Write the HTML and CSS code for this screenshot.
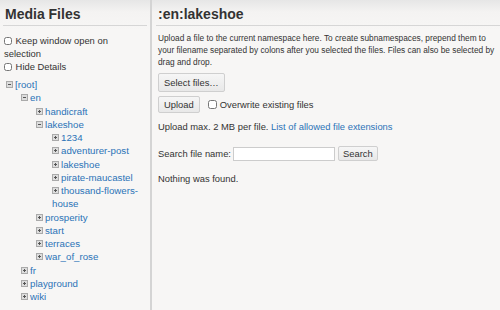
FILE: index.html
```html
<!DOCTYPE html>
<html>
<head>
<meta charset="utf-8">
<link rel="stylesheet" href="styles.css">
</head>
<body>
<div class="page">
  <aside class="side">
    <h1 class="title">Media Files</h1>
    <div class="opts">
      <label class="opt"><input type="checkbox" class="cb"> Keep window open on selection</label>
      <label class="opt"><input type="checkbox" class="cb"> Hide Details</label>
    </div>
    <ul class="tree">
      <li><span class="ic minus"></span><a>[root]</a>
        <ul>
          <li><span class="ic minus"></span><a>en</a>
            <ul>
              <li><span class="ic plus"></span><a>handicraft</a></li>
              <li><span class="ic minus"></span><a>lakeshoe</a>
                <ul>
                  <li><span class="ic plus"></span><a>1234</a></li>
                  <li><span class="ic plus"></span><a>adventurer-post</a></li>
                  <li><span class="ic plus"></span><a>lakeshoe</a></li>
                  <li><span class="ic plus"></span><a>pirate-maucastel</a></li>
                  <li><span class="ic plus"></span><a>thousand-flowers-house</a></li>
                </ul>
              </li>
              <li><span class="ic plus"></span><a>prosperity</a></li>
              <li><span class="ic plus"></span><a>start</a></li>
              <li><span class="ic plus"></span><a>terraces</a></li>
              <li><span class="ic plus"></span><a>war_of_rose</a></li>
            </ul>
          </li>
          <li><span class="ic plus"></span><a>fr</a></li>
          <li><span class="ic plus"></span><a>playground</a></li>
          <li><span class="ic plus"></span><a>wiki</a></li>
        </ul>
      </li>
    </ul>
  </aside>
  <main class="main">
    <h1 class="title">:en:lakeshoe</h1>
    <p class="intro">Upload a file to the current namespace here. To create subnamespaces, prepend them to your filename separated by colons after you selected the files. Files can also be selected by drag and drop.</p>
    <div class="row sel"><button class="btn">Select files…</button></div>
    <div class="row up"><button class="btn">Upload</button><label class="ow"><input type="checkbox" class="cb"> Overwrite existing files</label></div>
    <p class="max">Upload max. 2 MB per file. <a class="lnk">List of allowed file extensions</a></p>
    <div class="search">Search file name: <input type="text" class="inp"><button class="btn">Search</button></div>
    <p class="none">Nothing was found.</p>
  </main>
</div>
</body>
</html>
```
FILE: styles.css
```css
html, body {
  margin: 0;
  padding: 0;
  height: 100%;
}
body {
  font-family: "Liberation Sans", Arial, sans-serif;
  color: #333;
  background: #f7f6f5;
}
.page {
  display: flex;
  height: 310px;
  background: linear-gradient(#e6e6e6 0px, #f4f3f2 12px, #f7f6f5 30px);
}
.side {
  width: 150px;
  flex: none;
  border-right: 2px solid #d4d4d4;
}
.main {
  flex: 1;
  padding: 0 0 0 4px;
}
.title {
  margin: 0 3px;
  padding: 7px 2px 3px 2px;
  font-size: 14px;
  line-height: 15px;
  font-weight: bold;
  color: #333;
  border-bottom: 1px solid #d6d6d6;
}
.main .title {
  margin: 0;
  padding-left: 2px;
}
.opts {
  padding: 8px 4px 0 4px;
  font-size: 9.4px;
  line-height: 13px;
}
.opt {
  display: block;
}
.cb {
  width: 8px;
  height: 8px;
  margin: 0 1px 0 0;
  vertical-align: -1px;
}
.tree, .tree ul {
  list-style: none;
  margin: 0;
  padding: 0;
}
.tree {
  margin: 5px 0 0 6px;
  font-size: 9.7px;
  line-height: 13.25px;
}
.tree ul {
  padding-left: 15px;
}
.tree ul ul ul {
  padding-left: 16px;
}
.tree a {
  color: #2b73b7;
}
.ic {
  display: inline-block;
  width: 7px;
  height: 7px;
  margin-right: 2px;
  border: 1px solid #aaa;
  box-sizing: border-box;
  background: #ddd;
  position: relative;
  vertical-align: 0px;
}
.ic::before {
  content: "";
  position: absolute;
  left: 1px;
  top: 2px;
  width: 3px;
  height: 1px;
  background: #555;
}
.plus::after {
  content: "";
  position: absolute;
  left: 2px;
  top: 1px;
  width: 1px;
  height: 3px;
  background: #555;
}
.intro, .max, .none {
  margin: 0;
  font-size: 9.4px;
  line-height: 12px;
  padding-left: 2px;
}
.intro {
  margin-top: 6px;
  font-size: 8.3px;
  padding-right: 0;
}
.row {
  padding-left: 2px;
  font-size: 9.4px;
  display: flex;
  align-items: center;
}
.btn {
  font-family: "Liberation Sans", Arial, sans-serif;
  font-size: 9.4px;
  color: #333;
  background: linear-gradient(#f6f6f6, #e8e8e8);
  border: 1px solid #cfcfcf;
  border-radius: 2px;
  padding: 0 5px;
  margin: 0;
}
.sel {
  margin-top: 5px;
}
.sel .btn {
  height: 19px;
}
.up {
  margin-top: 4px;
}
.up .btn {
  height: 17px;
  padding: 0 5px;
}
.ow {
  margin-left: 8px;
  display: flex;
  align-items: center;
}
.ow .cb {
  width: 9px;
  height: 9px;
  margin-right: 3px;
  vertical-align: 0;
}
.max {
  margin-top: 8px;
}
.lnk {
  color: #2b73b7;
}
.search {
  margin-top: 13px;
  padding-left: 2px;
  font-size: 9.4px;
  display: flex;
  align-items: center;
}
.inp {
  width: 102px;
  height: 14px;
  box-sizing: border-box;
  border: 1px solid #ccc;
  background: #fff;
  margin: 0 3px 0 2px;
  padding: 0;
}
.search .btn {
  height: 15px;
  padding: 0 4px;
}
.none {
  margin-top: 12px;
}
```
